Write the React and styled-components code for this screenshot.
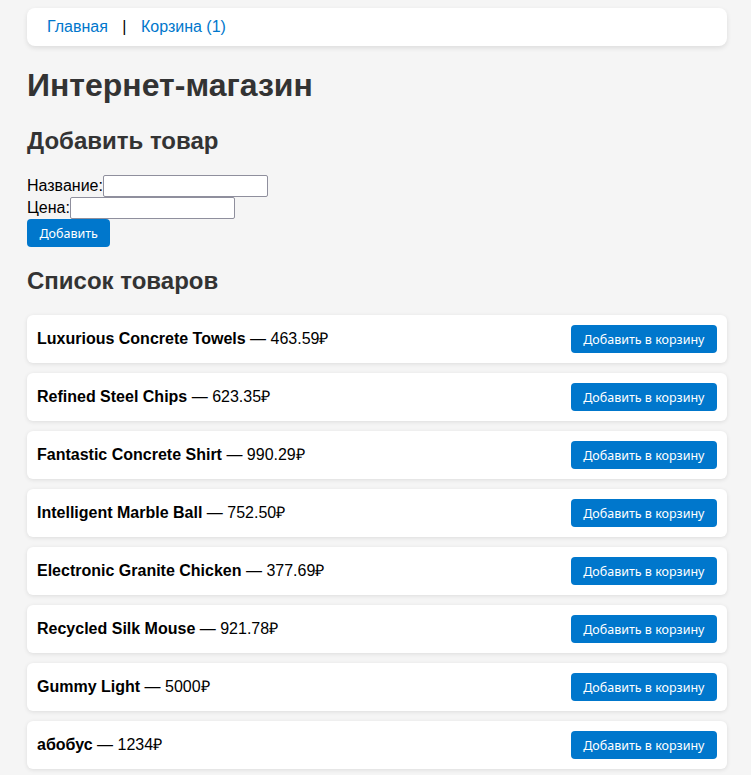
import React from "react";
import styled, { createGlobalStyle } from "styled-components";

const GlobalStyle = createGlobalStyle`
  html, body { margin: 0; padding: 0; }
  body {
    background: #f5f5f5;
    font-family: "Liberation Sans", Arial, sans-serif;
    font-size: 16px;
    color: #000;
  }
`;

const Page = styled.div`
  width: 700px;
  margin-left: 27px;
  padding-top: 8px;
  padding-bottom: 6px;
`;

const Nav = styled.nav`
  background: #fff;
  border-radius: 8px;
  box-shadow: 0 2px 5px rgba(0, 0, 0, 0.1);
  padding: 10px 20px;
  line-height: 18px;
  color: #000;
`;

const NavLink = styled.a`
  color: #0077cc;
  text-decoration: none;
`;

const Sep = styled.span`
  margin: 0 10px;
`;

const Title = styled.h1`
  font-size: 32px;
  font-weight: bold;
  color: #333;
  margin: 21px 0 23px;
`;

const Subtitle = styled.h2`
  font-size: 24px;
  font-weight: bold;
  color: #333;
  margin: 20px 0 ${(p) => p.$after || 20}px;
`;

const Form = styled.form`
  margin: 0;
`;

const Row = styled.div`
  display: flex;
  align-items: center;
  height: 22px;
`;

const Label = styled.label`
  font-size: 16px;
`;

const Input = styled.input`
  box-sizing: border-box;
  width: 165px;
  height: 22px;
  border: 1px solid #8f8f9d;
  border-radius: 2px;
  background: #fff;
  padding: 1px 2px;
  margin: 0;
`;

const Button = styled.button`
  background: #0077cc;
  color: #fff;
  border: none;
  border-radius: 4px;
  height: 28px;
  padding: 0 12.5px;
  font-family: "Noto Sans", "Open Sans", sans-serif;
  font-size: 12.5px;
  cursor: pointer;
  white-space: nowrap;
`;

const List = styled.div`
  display: flex;
  flex-direction: column;
  gap: 10px;
`;

const Card = styled.div`
  background: #fff;
  border-radius: 6px;
  box-shadow: 0 1px 4px rgba(0, 0, 0, 0.1);
  padding: 10px;
  display: flex;
  justify-content: space-between;
  align-items: center;
`;

const ItemText = styled.span`
  font-size: 16px;
  color: #000;
  margin-bottom: 2px;
`;

const products = [
  ["Luxurious Concrete Towels", "463.59"],
  ["Refined Steel Chips", "623.35"],
  ["Fantastic Concrete Shirt", "990.29"],
  ["Intelligent Marble Ball", "752.50"],
  ["Electronic Granite Chicken", "377.69"],
  ["Recycled Silk Mouse", "921.78"],
  ["Gummy Light", "5000"],
  ["абобус", "1234"],
];

export default function App() {
  return (
    <>
      <GlobalStyle />
      <Page>
        <Nav>
          <NavLink href="#">Главная</NavLink> <Sep>|</Sep>{" "}
          <NavLink href="#">Корзина (1)</NavLink>
        </Nav>
        <Title>Интернет-магазин</Title>
        <Subtitle $after={20}>Добавить товар</Subtitle>
        <Form onSubmit={(e) => e.preventDefault()}>
          <Row>
            <Label>Название:</Label>
            <Input type="text" />
          </Row>
          <Row>
            <Label>Цена:</Label>
            <Input type="text" />
          </Row>
          <Button type="submit">Добавить</Button>
        </Form>
        <Subtitle>Список товаров</Subtitle>
        <List>
          {products.map(([name, price]) => (
            <Card key={name}>
              <ItemText>
                <b>{name}</b> — {price}₽
              </ItemText>
              <Button>Добавить в корзину</Button>
            </Card>
          ))}
        </List>
      </Page>
    </>
  );
}
